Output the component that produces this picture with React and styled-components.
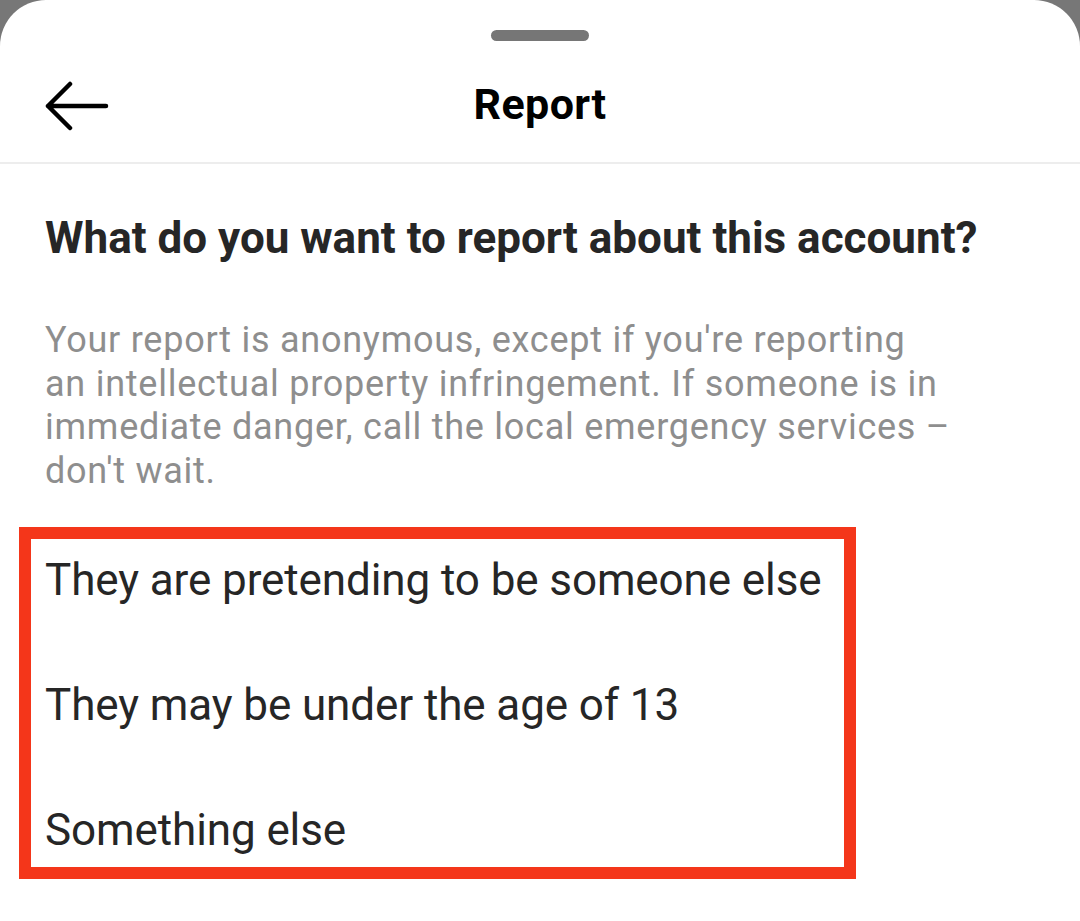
import React from 'react'
import styled, { createGlobalStyle } from 'styled-components'

const GlobalStyle = createGlobalStyle`
    * {
        box-sizing: border-box;
    }
    body {
        margin: 0;
        background: #777777;
        font-family: Roboto, "Noto Sans", "Liberation Sans", sans-serif;
    }
`

const options = [
    'They are pretending to be someone else',
    'They may be under the age of 13',
    'Something else',
]

function BackArrow() {
    return (
        <svg width="64" height="50" viewBox="0 0 64 50" fill="none">
            <path
                d="M3 25 H61 M25 3 L3 25 L25 47"
                stroke="#000"
                strokeWidth="4.5"
                strokeLinecap="round"
                strokeLinejoin="round"
            />
        </svg>
    )
}

function App() {
    return (
        <>
            <GlobalStyle />
            <Sheet>
                <HandleWrap>
                    <Handle />
                </HandleWrap>
                <Header>
                    <BackButton aria-label="Back">
                        <BackArrow />
                    </BackButton>
                    <Title>Report</Title>
                </Header>
                <Content>
                    <Question>What do you want to report about this account?</Question>
                    <Note>
                        Your report is anonymous, except if you're reporting<br />
                        an intellectual property infringement. If someone is in<br />
                        immediate danger, call the local emergency services –<br />
                        don't wait.
                    </Note>
                    <OptionsBox>
                        {options.map((o) => (
                            <Option key={o}>{o}</Option>
                        ))}
                    </OptionsBox>
                </Content>
            </Sheet>
        </>
    )
}

export default App

const Sheet = styled.div`
    background: #ffffff;
    border-radius: 46px 46px 0 0;
    height: 921px;
    overflow: hidden;
`

const HandleWrap = styled.div`
    display: flex;
    justify-content: center;
    padding-top: 30px;
`

const Handle = styled.div`
    width: 98px;
    height: 11px;
    border-radius: 6px;
    background: #767676;
`

const Header = styled.div`
    position: relative;
    height: 123px;
    display: flex;
    align-items: center;
    justify-content: center;
    padding-top: 4px;
    border-bottom: 2px solid #ededed;
`

const BackButton = styled.button`
    position: absolute;
    left: 45px;
    top: 40px;
    background: none;
    border: none;
    padding: 0;
    display: flex;
`

const Title = styled.h1`
    margin: 0;
    font-size: 43px;
    letter-spacing: 0.4px;
    font-weight: 700;
    color: #000;
    line-height: 50px;
`

const Content = styled.div`
    padding: 0 45px;
`

const Question = styled.h2`
    margin: 48px 0 0;
    font-size: 44px;
    line-height: 52px;
    font-weight: 700;
    color: #262626;
    white-space: nowrap;
`

const Note = styled.p`
    margin: 55px 0 0;
    font-size: 36px;
    letter-spacing: 0.75px;
    line-height: 43.6px;
    color: #8e8e8e;
    white-space: nowrap;
`

const OptionsBox = styled.div`
    margin: 34px 0 0 -26px;
    width: 837px;
    border: 12px solid #f4361a;
    padding: 14.5px 0 11.5px 14px;
    display: flex;
    flex-direction: column;
    gap: 73px;
`

const Option = styled.div`
    font-size: 44px;
    letter-spacing: -0.1px;
    line-height: 52px;
    color: #262626;
    white-space: nowrap;
`
